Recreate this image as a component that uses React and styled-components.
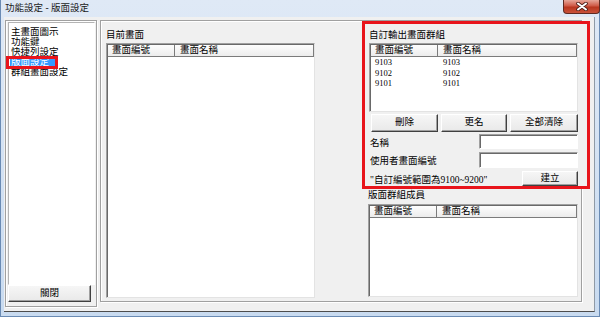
import styled, { createGlobalStyle } from "styled-components"

const GlobalStyle = createGlobalStyle`
  html, body { margin: 0; padding: 0; background: #fff; }
  body {
    font-family: "Liberation Serif", "Noto Sans CJK TC", serif;
    font-size: 9.5px;
    color: #000;
  }
  * { box-sizing: border-box; }
`

const sideItems = ["主畫面圖示", "功能鍵", "快捷列設定", "版面設定", "群組畫面設定"]
const customRows = [
  { id: "9103", name: "9103" },
  { id: "9102", name: "9102" },
  { id: "9101", name: "9101" },
]

export default function App() {
  return (
    <>
      <GlobalStyle />
      <Window>
        <TitleBar>
          <Title>功能設定 - 版面設定</Title>
          <CloseButton>
            <svg width="12" height="9" viewBox="0 0 12 9">
              <path d="M2 1.5 L10 7.5 M10 1.5 L2 7.5" stroke="#4b1c16" strokeWidth="3.6" strokeLinecap="round" />
              <path d="M2 1.5 L10 7.5 M10 1.5 L2 7.5" stroke="#fff" strokeWidth="2" strokeLinecap="round" />
            </svg>
          </CloseButton>
        </TitleBar>

        <Client>
          <SideGroup>
            <SideList>
              {sideItems.map((item) =>
                <SideItem key={item}>
                  {item === "版面設定" ? <Selected>{item}</Selected> : item}
                </SideItem>
              )}
            </SideList>
            <Button $w={83} $h={17}>關閉</Button>
          </SideGroup>

          <MainGroup>
            <MiddleCol>
              <Label>目前畫面</Label>
              <ListView $grow>
                <ListHeader>
                  <HeadCell>畫面編號</HeadCell>
                  <HeadCell>畫面名稱</HeadCell>
                </ListHeader>
              </ListView>
            </MiddleCol>

            <RightCol>
              <RedBox>
                <Label>自訂輸出畫面群組</Label>
                <ListView $h={69}>
                  <ListHeader>
                    <HeadCell>畫面編號</HeadCell>
                    <HeadCell>畫面名稱</HeadCell>
                  </ListHeader>
                  {customRows.map((row) =>
                    <Row key={row.id}>
                      <Cell>{row.id}</Cell>
                      <Cell>{row.name}</Cell>
                    </Row>
                  )}
                </ListView>

                <ButtonRow>
                  <Button $w={67}>刪除</Button>
                  <Button $w={66}>更名</Button>
                  <Button $w={68}>全部清除</Button>
                </ButtonRow>

                <FormRow $top={2}>
                  <span>名稱</span>
                  <TextInput $h={15} />
                </FormRow>
                <FormRow $top={3}>
                  <span>使用者畫面編號</span>
                  <TextInput $h={16} />
                </FormRow>
                <FormRow $top={3}>
                  <span>"自訂編號範圍為9100~9200"</span>
                  <Button $w={56} $h={15} style={{ marginLeft: "auto" }}>建立</Button>
                </FormRow>
              </RedBox>

              <MemberSection>
                <Label>版面群組成員</Label>
                <ListView $grow>
                  <ListHeader>
                    <HeadCell>畫面編號</HeadCell>
                    <HeadCell>畫面名稱</HeadCell>
                  </ListHeader>
                </ListView>
              </MemberSection>
            </RightCol>
          </MainGroup>
        </Client>
      </Window>
    </>
  )
}

const Window = styled.div`
  width: 600px;
  height: 317px;
  display: flex;
  flex-direction: column;
  background: linear-gradient(#dfe9f6, #c9dbf0);
  border: 1px solid #6a8bb4;
  border-top: none;
`
const TitleBar = styled.div`
  height: 17px;
  display: flex;
  align-items: flex-start;
  padding-left: 4px;
`
const Title = styled.span`
  line-height: 17px;
  color: #1b1b1b;
`
const CloseButton = styled.div`
  margin-left: auto;
  margin-right: -1px;
  width: 37px;
  height: 14px;
  display: flex;
  align-items: center;
  justify-content: center;
  background: linear-gradient(#e6a699, #cf5a47 45%, #b9361f 55%, #c9523a);
  border: 1px solid #5e2a22;
  border-top: none;
  border-radius: 0 0 4px 4px;
`
const Client = styled.div`
  flex: 1;
  margin: 0 4px 4px 3px;
  display: flex;
  align-items: flex-start;
  gap: 3px;
  padding: 3px 0 0 1px;
  background: #f0f0f0;
  border-right: 1px solid #8f9aa6;
  border-bottom: 1px solid #4d4d4d;
`
const SideGroup = styled.div`
  width: 92px;
  height: 287px;
  display: flex;
  flex-direction: column;
  padding: 1px 1px 4px 2px;
  border: 1px solid #a0a0a0;
  box-shadow: inset 1px 1px 0 #fff, 1px 1px 0 #fff;
`
const SideList = styled.div`
  flex: 1;
  background: #fff;
  padding: 4px 0 0 1px;
  border: 1px solid;
  border-color: #b4b4b4 #fff #fff #b4b4b4;
`
const SideItem = styled.div`
  height: 10px;
  line-height: 10px;
  padding-left: 1px;
  white-space: nowrap;
`
const Selected = styled.span`
  position: relative;
  display: inline-block;
  height: 10px;
  padding-right: 6px;
  margin-left: -1px;
  padding-left: 1px;
  background: #3399ff;
  color: #fff;
  &::after {
    content: "";
    position: absolute;
    left: -4px;
    right: -3px;
    top: -1px;
    bottom: -2px;
    border: 3px solid #e8141b;
  }
`
const MainGroup = styled.div`
  width: 482px;
  height: 282px;
  display: flex;
  border: 1px solid #a0a0a0;
  box-shadow: inset 1px 1px 0 #fff, 1px 1px 0 #fff;
`
const MiddleCol = styled.div`
  width: 209px;
  margin-left: 5px;
  padding: 9px 0 3px;
  display: flex;
  flex-direction: column;
`
const Label = styled.div`
  line-height: 10px;
  height: 10px;
  margin-bottom: 3px;
  white-space: nowrap;
`
const ListView = styled.div`
  background: #fff;
  height: ${(p) => (p.$h ? `${p.$h}px` : "auto")};
  flex: ${(p) => (p.$grow ? 1 : "none")};
  display: flex;
  flex-direction: column;
  border: 1px solid;
  border-color: #a0a0a0 #e3e3e3 #e3e3e3 #a0a0a0;
  box-shadow: inset 1px 1px 0 #696969;
  padding: 1px 0 0 1px;
`
const ListHeader = styled.div`
  display: flex;
  height: 12px;
  background: linear-gradient(#fdfdfd, #ececec);
  border-bottom: 1px solid #7b7b7b;
  border-right: 1px solid #7b7b7b;
`
const HeadCell = styled.div`
  width: 67px;
  line-height: 11px;
  padding-left: 4px;
  border-right: 1px solid #7b7b7b;
  white-space: nowrap;
  &:last-child { flex: 1; border-right: none; padding-left: 5px; }
`
const Row = styled.div`
  display: flex;
  height: 10.5px;
  line-height: 10.5px;
  font-size: 8.5px;
  &:first-of-type { margin-top: 1px; }
`
const Cell = styled.div`
  width: 67px;
  padding-left: 4px;
  &:last-child { flex: 1; padding-left: 5px; }
`
const RightCol = styled.div`
  width: 228px;
  margin-left: auto;
  margin-right: -9px;
  display: flex;
  flex-direction: column;
  padding-bottom: 4px;
`
const RedBox = styled.div`
  background: #f0f0f0;
  border: 3px solid #e8141b;
  padding: 6px 9px 0 4px;
  display: flex;
  flex-direction: column;
`
const ButtonRow = styled.div`
  display: flex;
  gap: 3px;
  margin: 2px 0 0 2px;
`
const Button = styled.button`
  width: ${(p) => p.$w}px;
  height: ${(p) => p.$h || 18}px;
  padding: 0;
  font: inherit;
  color: #000;
  background: linear-gradient(#f6f6f6, #e9e9e9);
  border: 1px solid;
  border-color: #fff #404040 #404040 #fff;
  box-shadow: inset -1px -1px 0 #a0a0a0;
  line-height: 1;
`
const FormRow = styled.div`
  display: flex;
  align-items: center;
  margin-top: ${(p) => p.$top}px;
  padding-left: 1px;
  white-space: nowrap;
`
const TextInput = styled.div`
  width: 99px;
  height: ${(p) => p.$h}px;
  margin-left: auto;
  background: #fff;
  border: 1px solid;
  border-color: #a0a0a0 #fff #fff #a0a0a0;
  box-shadow: inset 1px 1px 0 #696969;
`
const MemberSection = styled.div`
  flex: 1;
  display: flex;
  flex-direction: column;
  padding: 1px 12px 0 6px;
  & > ${Label} { margin-bottom: 4px; }
`
